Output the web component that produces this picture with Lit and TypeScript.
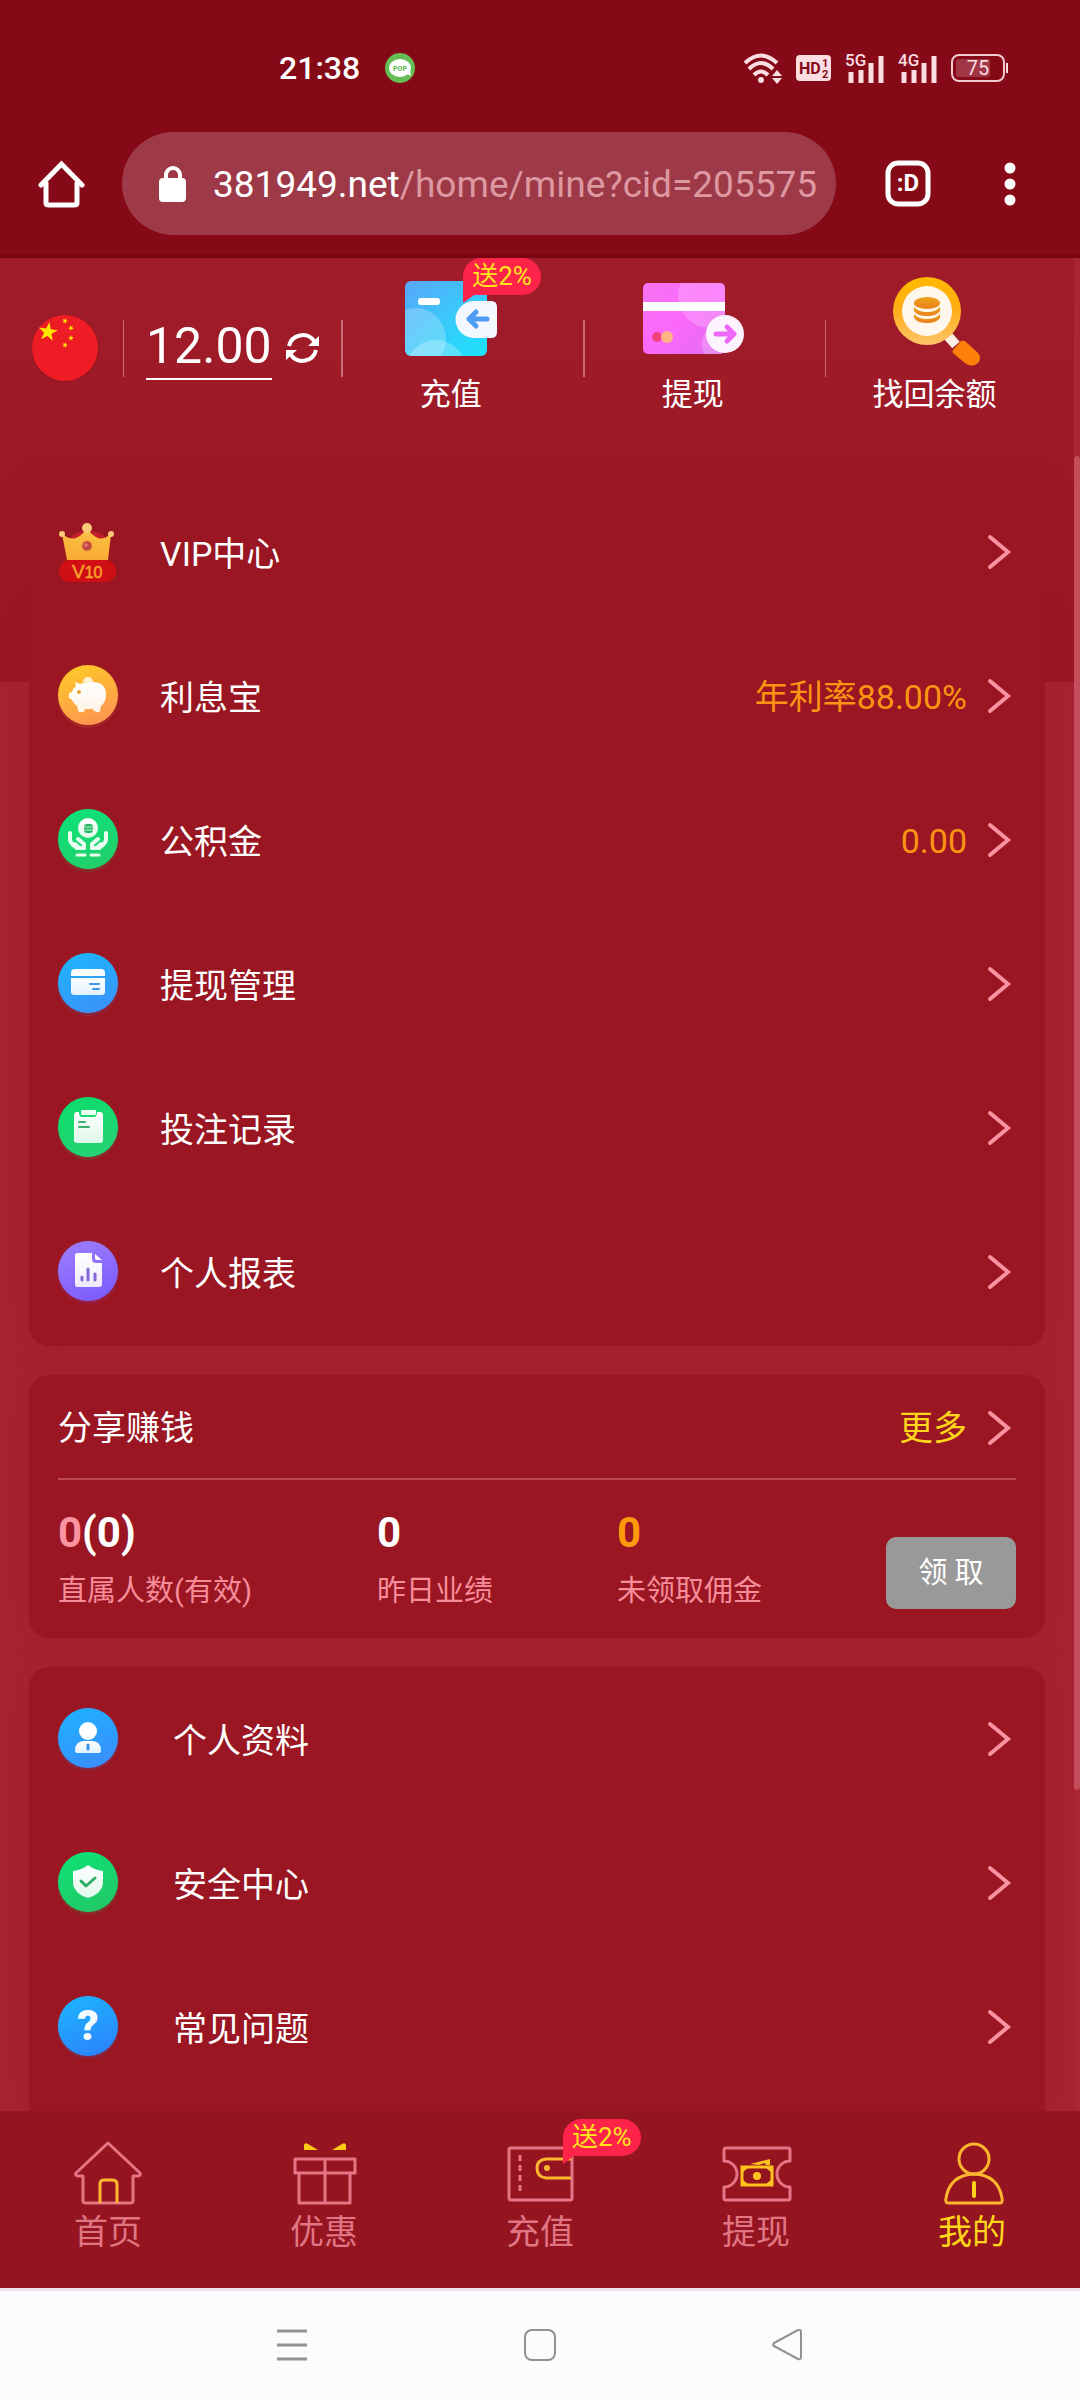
import { LitElement, html, svg, css, nothing, TemplateResult } from "lit";
import { customElement, property } from "lit/decorators.js";

const baseStyles = css`
  *,
  *::before,
  *::after {
    box-sizing: border-box;
  }
  a {
    color: inherit;
    text-decoration: none;
  }
  button {
    font: inherit;
    color: inherit;
    background: none;
    border: 0;
    padding: 0;
    margin: 0;
  }
  ul {
    list-style: none;
    margin: 0;
    padding: 0;
  }
  svg {
    display: block;
    flex: none;
  }
`;

const chevron = html`<svg class="chevron" width="29" height="38" viewBox="0 0 29 38" aria-hidden="true">
  <path d="M3 4 L21 19 L3 34" fill="none" stroke="#f991a0" stroke-width="4" stroke-linecap="round" />
</svg>`;

/* Round icons share a disc, a soft glow below it and a per-colour gradient. */
const disc = (id: string, from: string, to: string, glyph: TemplateResult) => html`
  <svg width="62" height="64" viewBox="0 0 62 64" aria-hidden="true">
    <defs>
      <linearGradient id=${id} x1="0.3" y1="0" x2="0.7" y2="1">
        <stop offset="0" stop-color=${from} />
        <stop offset="1" stop-color=${to} />
      </linearGradient>
      <linearGradient id="pale" x1="0" y1="0" x2="0" y2="1">
        <stop offset="0" stop-color="#ffffff" />
        <stop offset="1" stop-color="#ffffff" stop-opacity="0.86" />
      </linearGradient>
    </defs>
    <circle cx="31" cy="33" r="31" fill=${to} opacity="0.12" />
    <circle cx="31" cy="31" r="30" fill="url(#${id})" />
    ${glyph}
  </svg>
`;

const icons: Record<string, TemplateResult> = {
  vip: html`<svg width="62" height="64" viewBox="0 0 62 64" aria-hidden="true">
    <defs>
      <linearGradient id="crown" x1="0" y1="0" x2="0" y2="1">
        <stop offset="0" stop-color="#fcc245" />
        <stop offset="1" stop-color="#f8ab35" />
      </linearGradient>
    </defs>
    <path d="M14 17 Q20 11 28 12 H34 Q44 12 48 17 L44 28 H18 Z" fill="#c4202a" />
    <path d="M5 14 Q13 20 19 18 Q26 15 30 8 Q34 15 41 18 Q46 20 54 14 L51 40 H10 Z" fill="url(#crown)" />
    <circle cx="5" cy="14" r="3" fill="#fbc878" />
    <circle cx="30" cy="8" r="5" fill="#fbc878" />
    <circle cx="54" cy="14" r="3" fill="#fbc878" />
    <circle cx="30" cy="26" r="5" fill="#c2453f" stroke="#e98a3c" stroke-width="1" />
    <circle cx="29" cy="25" r="2" fill="#da7368" />
    <rect x="2" y="40" width="57" height="22" rx="11" fill="#cf0f14" />
    <text x="15" y="58" font-family="Liberation Sans, sans-serif" font-size="19" fill="#fca02c" stroke="#fca02c" stroke-width="0.5">V<tspan font-size="16">10</tspan></text>
  </svg>`,
  piggy: disc("amber", "#ffc928", "#fd9452", svg`
    <path d="M26 18 A5 5 0 0 1 36 18 Z" fill="#fff3cf" />
    <path d="M18 18 L23 20 Q27 18 33 18 H37 Q49 19 49 31 Q49 38 44 42 L43 47 Q42 49 40 48 L37 47 L36 45 H28 L27 48 H23 Q21 48 21 46 L20 42 Q17 40 15 36 L12 34 V29 L15 28 Q16 24 19 22 Z" fill="url(#pale)" />
    <circle cx="22" cy="28" r="2" fill="#e9a53a" />`),
  fund: disc("mint", "#0de277", "#23cf6b", svg`
    <circle cx="31" cy="20" r="10" fill="url(#pale)" />
    <rect x="27" y="16" width="9" height="9" rx="3" fill="#29b765" />
    <path d="M27 19 H36 M27 22 H36" stroke="#bdf5d3" stroke-width="1" />
    <g fill="none" stroke="#e9fff0" stroke-linecap="round" stroke-linejoin="round">
      <path d="M13 25 V32 Q14 36 20 40 H27" stroke-width="4" />
      <path d="M21 31 L27 36 V40 H22 L18 36" stroke-width="4" />
      <path d="M49 25 V32 Q48 36 42 40 H35" stroke-width="4" />
      <path d="M41 31 L35 36 V40 H40 L44 36" stroke-width="4" />
      <path d="M20 47 H28 M34 47 H42" stroke-width="3" />
    </g>`),
  bankcard: disc("sky", "#1fb4fc", "#3a92fa", svg`
    <path d="M14 24 V21 Q14 17 18 17 H44 Q48 17 48 21 V24 Z" fill="#fff" />
    <path d="M14 26 H48 V40 Q48 43 45 43 H17 Q14 43 14 40 Z" fill="url(#pale)" />
    <path d="M33 32 H42 M36 37 H42" stroke="#3e97e6" stroke-width="2" stroke-linecap="round" />`),
  clipboard: disc("leaf", "#0ddd6d", "#26d273", svg`
    <path d="M20 16 H22 Q22 21 25 21 H37 Q40 21 40 16 H43 Q46 16 46 19 V44 Q46 47 43 47 H20 Q17 47 17 44 V19 Q17 16 20 16 Z" fill="url(#pale)" />
    <rect x="24" y="14" width="15" height="5" rx="1" fill="#effff4" />
    <path d="M22 26 H28 M22 31 H32" stroke="#3fae6c" stroke-width="2" stroke-linecap="round" />`),
  report: disc("violet", "#9a7cff", "#7c5cfb", svg`
    <path d="M20 13 H35 V19 Q35 23 39 23 H45 V44 Q45 47 42 47 H20 Q18 47 18 44 V16 Q18 13 20 13 Z" fill="url(#pale)" />
    <path d="M38 14 L45 20 H40 Q38 20 38 18 Z" fill="#fff" />
    <path d="M25 37 V40 M31 29 V40 M38 34 V40" stroke="#8467d8" stroke-width="3" stroke-linecap="round" />`),
  person: disc("azure", "#1fb0ff", "#3a8efc", svg`
    <circle cx="31" cy="24" r="9" fill="#fff" />
    <path d="M18 44 Q18 34 27 34 H35 Q44 34 44 44 Q44 46 42 46 H20 Q18 46 18 44 Z" fill="url(#pale)" />
    <path d="M31 38 V42" stroke="#3993e4" stroke-width="3" stroke-linecap="round" />`),
  shield: disc("jade", "#0de074", "#22c866", svg`
    <path d="M31 14 Q37 19 46 20 V31 Q46 42 31 47 Q16 42 16 31 V20 Q25 19 31 14 Z" fill="url(#pale)" />
    <path d="M24 30 L29 35 L38 27" fill="none" stroke="#2fae68" stroke-width="3" stroke-linecap="round" stroke-linejoin="round" />`),
  question: disc("ocean", "#1eb2ff", "#2b84fb", svg`
    <text x="31" y="45" text-anchor="middle" font-family="Roboto, sans-serif" font-weight="900" font-size="42" fill="#f2fbff">?</text>`),
};

const navIcons: Record<string, TemplateResult> = {
  home: html`<svg width="72" height="64" viewBox="0 0 72 64" aria-hidden="true">
    <path d="M36 2 L68 32 Q69 35 66 35 H61 V60 Q61 62 58 62 H14 Q11 62 11 60 V35 H6 Q3 35 4 32 Z" fill="none" stroke="#e57485" stroke-width="3" stroke-linejoin="round" />
    <path d="M28 62 V43 Q28 39 32 39 H40 Q45 39 45 43 V62" fill="none" stroke="#ffb62f" stroke-width="3" />
  </svg>`,
  gift: html`<svg width="72" height="64" viewBox="0 0 72 64" aria-hidden="true">
    <g fill="none" stroke="#e57485" stroke-width="3" stroke-linejoin="round">
      <rect x="7" y="18" width="60" height="14" />
      <path d="M11 32 V62 H62 V32 M37 18 V62" />
    </g>
    <path d="M16 9 V4 Q17 1 20 3 L30 9 Z M58 9 V4 Q57 1 54 3 L44 9 Z" fill="#ffcb14" />
  </svg>`,
  wallet: html`<svg width="72" height="64" viewBox="0 0 72 64" aria-hidden="true">
    <rect x="5" y="7" width="63" height="52" rx="2" fill="none" stroke="#e57485" stroke-width="3" />
    <path d="M16 14 V50" stroke="#e57485" stroke-width="3" stroke-dasharray="6 4" />
    <path d="M67 18 H42 Q33 19 33 27 Q33 36 42 37 H67" fill="none" stroke="#ffb62f" stroke-width="3" />
    <circle cx="43" cy="27" r="3" fill="#ffb62f" />
  </svg>`,
  ticket: html`<svg width="72" height="64" viewBox="-1 0 72 64" aria-hidden="true">
    <path d="M5 7 H67 Q69 7 69 9 V20 A13 13 0 0 0 69 46 V57 Q69 59 67 59 H5 Q3 59 3 57 V46 A13 13 0 0 0 3 20 V9 Q3 7 5 7 Z" fill="none" stroke="#e57485" stroke-width="3" stroke-linejoin="round" />
    <rect x="21" y="26" width="30" height="18" fill="none" stroke="#ffc21e" stroke-width="3" />
    <path d="M22 27 h5 l-5 4 z M50 27 h-5 l5 4 z M22 43 h5 l-5 -4 z M50 43 h-5 l5 -4 z" fill="#ffc21e" />
    <circle cx="36" cy="35" r="4" fill="#ffc21e" />
    <path d="M29 23 L49 18 V24 L45 24 L44 22 L38 24 Z" fill="#ffc21e" />
  </svg>`,
  mine: html`<svg width="72" height="64" viewBox="-1 0 72 64" aria-hidden="true">
    <g fill="none" stroke="#ffb62f" stroke-width="3">
      <circle cx="37" cy="18" r="15" />
      <path d="M11 62 Q8 62 9 57 Q13 34 37 33 Q61 34 65 57 Q66 62 63 62 Z" stroke-linejoin="round" />
      <path d="M37 42 V55" stroke="#ffd21c" stroke-width="4" stroke-linecap="round" />
    </g>
  </svg>`,
};

const actionIcons: Record<string, TemplateResult> = {
  deposit: html`<svg width="105" height="105" viewBox="0 0 105 105" aria-hidden="true">
    <defs>
      <linearGradient id="wallet" x1="0" y1="0" x2="1" y2="1">
        <stop offset="0" stop-color="#5aa5fb" />
        <stop offset="0.5" stop-color="#3ac8fa" />
        <stop offset="1" stop-color="#1be4fb" />
      </linearGradient>
      <clipPath id="walletBox"><rect x="7" y="15" width="82" height="75" rx="6" /></clipPath>
    </defs>
    <rect x="7" y="15" width="82" height="75" rx="6" fill="url(#wallet)" />
    <g clip-path="url(#walletBox)" fill="#fff" opacity="0.22">
      <circle cx="17" cy="73" r="31" />
    </g>
    <g clip-path="url(#walletBox)" fill="#fff" opacity="0.25">
      <circle cx="38" cy="104" r="30" />
    </g>
    <rect x="20" y="32" width="22" height="7" rx="3" fill="#fff" />
    <path d="M76 35 H93 Q99 35 99 41 V66 Q99 72 93 72 H76 A18 18 0 0 1 76 35 Z" fill="#f3f7ff" />
    <path d="M89 53 H71 M78 46 L71 53 L78 60" fill="none" stroke="#4e9df5" stroke-width="5" stroke-linecap="round" stroke-linejoin="round" />
  </svg>`,
  withdraw: html`<svg width="105" height="105" viewBox="0 0 105 105" aria-hidden="true">
    <defs>
      <linearGradient id="card" x1="0" y1="0" x2="1" y2="1">
        <stop offset="0" stop-color="#f673f3" />
        <stop offset="0.5" stop-color="#fb68fb" />
        <stop offset="1" stop-color="#e070f0" />
      </linearGradient>
      <clipPath id="cardBox"><rect x="3" y="17" width="82" height="71" rx="5" /></clipPath>
    </defs>
    <rect x="3" y="17" width="82" height="71" rx="5" fill="url(#card)" />
    <g clip-path="url(#cardBox)" fill="#fff" opacity="0.2">
      <circle cx="70" cy="30" r="32" />
      <circle cx="84" cy="78" r="22" />
    </g>
    <rect x="3" y="36" width="82" height="9" fill="#fff" />
    <circle cx="17" cy="71" r="5" fill="#f0407e" />
    <circle cx="27" cy="71" r="6" fill="#fdb382" />
    <circle cx="85" cy="68" r="19" fill="#fdf3ff" />
    <path d="M76 68 H94 M87 61 L94 68 L87 75" fill="none" stroke="#ee69f7" stroke-width="5" stroke-linecap="round" stroke-linejoin="round" />
  </svg>`,
  recover: html`<svg width="105" height="105" viewBox="0 0 105 105" aria-hidden="true">
    <defs>
      <linearGradient id="lens" x1="0" y1="0" x2="0" y2="1">
        <stop offset="0" stop-color="#ffb900" />
        <stop offset="0.45" stop-color="#ffad12" />
        <stop offset="1" stop-color="#fdc56a" />
      </linearGradient>
      <linearGradient id="coins" x1="0" y1="0" x2="0" y2="1">
        <stop offset="0" stop-color="#eca51c" />
        <stop offset="1" stop-color="#ea7e1b" />
      </linearGradient>
    </defs>
    <path d="M66 70 L74 79" stroke="#fdeee2" stroke-width="10" />
    <path d="M71 84 L79 75 Q82 74 84 76 L96 87 Q100 92 96 97 Q90 102 83 97 L71 87 Q70 86 71 84 Z" fill="#fd8008" />
    <circle cx="45" cy="45" r="34" fill="url(#lens)" />
    <circle cx="45" cy="45" r="25" fill="#fff7ec" />
    <g fill="url(#coins)" transform="translate(1 0)">
      <ellipse cx="44" cy="37" rx="13" ry="6" />
      <path d="M31 41 Q35 46 44 46 Q53 46 57 41 V45 Q54 50 44 50 Q34 50 31 45 Z" />
      <path d="M31 48 Q35 53 44 53 Q53 53 57 48 V52 Q54 57 44 57 Q34 57 31 52 Z" />
    </g>
  </svg>`,
};

interface Row {
  icon: string;
  label: string;
  value?: string;
}

/** A rounded panel listing links with an icon, a label and an optional value. */
@customElement("menu-card")
export class MenuCard extends LitElement {
  @property({ attribute: false }) rows: Row[] = [];

  static styles = [
    baseStyles,
    css`
      :host {
        display: block;
      }
      .row {
        display: flex;
        align-items: center;
        height: 144px;
        padding: 0 29px 0 28px;
      }
      .label {
        flex: 1;
        padding: 4px 0 0 var(--label-gap, 41px);
      }
      .value {
        color: #fb9412;
        padding: 2px 20px 0 0;
      }
    `,
  ];

  render() {
    return html`<ul>
      ${this.rows.map(
        (r) => html`<li>
          <a class="row" href="#">
            ${icons[r.icon]}
            <span class="label">${r.label}</span>
            ${r.value ? html`<span class="value">${r.value}</span>` : nothing} ${chevron}
          </a>
        </li>`
      )}
    </ul>`;
  }
}

@customElement("promo-badge")
export class PromoBadge extends LitElement {
  static styles = css`
    :host {
      display: block;
      padding: 0 9px;
      border-radius: 19px 19px 19px 0;
      background: #fe2349;
      color: #ffe51c;
      font-size: 26px;
      line-height: 37px;
      white-space: nowrap;
    }
    :host::after {
      content: "";
      position: absolute;
      left: 0;
      top: 100%;
      border-top: 8px solid #fe2349;
      border-right: 11px solid transparent;
    }
  `;
  render() {
    return html`<slot></slot>`;
  }
}

@customElement("app-root")
export class AppRoot extends LitElement {
  static styles = [
    baseStyles,
    css`
      :host {
        display: flex;
        flex-direction: column;
        min-height: 100vh;
        font-family: Roboto, "Noto Sans CJK SC", sans-serif;
        font-size: 34px;
        line-height: 48px;
        color: #fff;
        background: #a82331;
      }

      .chrome {
        background: #850917;
        border-bottom: 3px solid #780511;
        padding-bottom: 20px;
      }
      .status {
        display: flex;
        align-items: center;
        padding: 48px 72px 44px 279px;
        height: 132px;
      }
      .time {
        font-size: 32px;
        line-height: 40px;
        font-weight: 500;
        margin-right: 25px;
      }
      .signals {
        display: flex;
        align-items: center;
        gap: 14px;
        margin-left: auto;
      }
      .toolbar {
        display: flex;
        align-items: center;
        gap: 37px;
        padding: 0 40px 0 38px;
      }
      .address {
        flex: 1;
        min-width: 0;
        display: flex;
        align-items: center;
        gap: 27px;
        height: 103px;
        padding: 2px 18px 0 37px;
        border-radius: 52px;
        background: #9e3a47;
        text-align: left;
        font-size: 37px;
        white-space: nowrap;
        overflow: hidden;
      }
      .path {
        color: #dd98a2;
      }
      .tabs {
        padding: 0 12px;
      }
      .more {
        padding: 0 24px;
      }

      .page {
        flex: 1;
        display: flex;
        flex-direction: column;
        position: relative;
        padding: 0 35px 0 29px;
        background: linear-gradient(#a11c2a, #991622) 0 0 / 100% 424px no-repeat, #a82331;
      }
      .scrollbar {
        position: absolute;
        top: 0;
        right: 0;
        bottom: 0;
        width: 6px;
        background: #a82534;
      }
      .thumb {
        height: 72%;
        margin-top: 198px;
        border-radius: 3px;
        background: #c54c5b;
      }
      .head {
        display: flex;
        height: 222px;
        margin: 0 -22px 0 0;
        padding: 0 0 42px 3px;
      }
      .account {
        display: flex;
        align-items: center;
        gap: 22px;
      }
      .rule {
        flex: none;
        width: 1px;
        height: 57px;
        background: #cc6b78;
        align-self: center;
      }
      .rule.bold {
        width: 2px;
      }
      .balance {
        display: flex;
        align-items: center;
        gap: 14px;
      }
      .amount {
        font-size: 50px;
        line-height: 58px;
        padding-bottom: 3px;
        border-bottom: 2px solid #fff;
      }
      .actions {
        flex: 1;
        display: grid;
        grid-template-columns: repeat(3, 1fr);
        margin-left: 22px;
      }
      .action {
        display: flex;
        height: 100%;
      }
      .tile {
        flex: 1;
        display: flex;
        flex-direction: column;
        align-items: center;
        padding: 8px 24px 0 0;
        font-size: 31px;
        line-height: 48px;
        white-space: nowrap;
      }
      .art {
        position: relative;
      }
      .art promo-badge {
        position: absolute;
        left: 65px;
        top: -8px;
      }

      .card {
        background: #991622;
        border-radius: 20px;
        margin-bottom: 29px;
        box-shadow: 0 0 30px rgba(140, 22, 32, 0.3);
      }
      .card.last {
        flex: 1;
        margin-bottom: 0;
        border-radius: 20px 20px 0 0;
        --label-gap: 54px;
      }
      .main-menu {
        padding-bottom: 2px;
      }
      .share {
        padding: 0 29px 29px;
      }
      .share-head {
        display: flex;
        align-items: center;
        height: 105px;
      }
      .share-title {
        flex: 1;
        margin: 0;
        font: inherit;
      }
      .share-more {
        display: flex;
        align-items: center;
        gap: 20px;
        color: #ffd61a;
      }
      .divider {
        height: 2px;
        border: 0;
        margin: -2px 0 0;
        background: #bb4553;
      }
      .share-body {
        display: grid;
        grid-template-columns: 319fr 240fr 269fr 130px;
        align-items: end;
        padding-top: 29px;
      }
      .stats {
        display: contents;
      }
      .stat {
        display: flex;
        flex-direction: column-reverse;
        white-space: nowrap;
      }
      .stat dt {
        font-size: 29px;
        line-height: 36px;
        color: #f78c9a;
        padding-top: 16px;
      }
      .stat dd {
        margin: 0;
        font-size: 42px;
        line-height: 48px;
        font-weight: 700;
      }
      .pink {
        color: #fc93a1;
      }
      .orange {
        color: #fe9a0c;
      }
      .claim {
        height: 72px;
        border-radius: 10px;
        background: #999;
        font-size: 29px;
        line-height: 40px;
        color: #fff;
      }
      dl {
        margin: 0;
      }

      .tabbar {
        background: #941420;
        position: relative;
      }
      .tabbar ul {
        display: grid;
        grid-template-columns: repeat(5, 1fr);
      }
      .tab {
        display: flex;
        flex-direction: column;
        align-items: center;
        gap: 6px;
        padding: 30px 0 35px;
        line-height: 42px;
        color: #e07584;
      }
      .tab.current {
        color: #ffd61a;
      }
      .tab .art promo-badge {
        left: 59px;
        top: -22px;
      }

      .system {
        display: grid;
        grid-template-columns: repeat(3, 23%);
        justify-content: center;
        justify-items: center;
        align-items: center;
        height: 112px;
        padding-bottom: 2px;
        border-top: 3px solid #ece4ea;
        background: #fcfcfe;
      }
    `,
  ];

  private mainRows: Row[] = [
    { icon: "vip", label: "VIP中心" },
    { icon: "piggy", label: "利息宝", value: "年利率88.00%" },
    { icon: "fund", label: "公积金", value: "0.00" },
    { icon: "bankcard", label: "提现管理" },
    { icon: "clipboard", label: "投注记录" },
    { icon: "report", label: "个人报表" },
  ];

  private settingRows: Row[] = [
    { icon: "person", label: "个人资料" },
    { icon: "shield", label: "安全中心" },
    { icon: "question", label: "常见问题" },
  ];

  private tabs = [
    { icon: "home", label: "首页" },
    { icon: "gift", label: "优惠" },
    { icon: "wallet", label: "充值", badge: "送2%" },
    { icon: "ticket", label: "提现" },
    { icon: "mine", label: "我的", current: true },
  ];

  private actions = [
    { icon: "deposit", label: "充值", badge: "送2%" },
    { icon: "withdraw", label: "提现" },
    { icon: "recover", label: "找回余额" },
  ];

  private signal(label: string) {
    return html`<svg width="39" height="44" viewBox="0 -6 39 44" aria-hidden="true">
      <text x="0" y="14" font-family="Roboto, sans-serif" font-weight="500" font-size="17" fill="#fbdde2">${label}</text>
      <path d="M6 20 V31 M16 18 V31 M26 11 V31 M36 4 V31" stroke="#fbdde2" stroke-width="5" />
    </svg>`;
  }

  private renderChrome() {
    return html`<header class="chrome">
      <div class="status">
        <span class="time">21:38</span>
        <svg width="30" height="30" viewBox="0 0 30 30" aria-hidden="true">
          <circle cx="15" cy="15" r="15" fill="#66bc55" />
          <ellipse cx="15" cy="15" rx="11" ry="9" fill="#fff" />
          <path d="M20 20 L26 23 L25 16 Z" fill="#fff" />
          <text x="15" y="18" text-anchor="middle" font-family="Roboto, sans-serif" font-weight="900" font-size="7" fill="#66bc55">POP</text>
        </svg>
        <div class="signals">
          <svg width="38" height="32" viewBox="0 0 38 32" aria-hidden="true">
            <g fill="none" stroke="#fbdde2" stroke-width="4">
              <path d="M1 11 Q17 -4 33 11" />
              <path d="M5 17 Q17 5 29 17" />
              <path d="M10 23 Q17 16 24 23" />
            </g>
            <circle cx="17" cy="28" r="3" fill="#fbdde2" />
            <path d="M28 24 L33 18 L38 24 Z M28 26 H38 L33 32 Z" fill="#fbdde2" />
          </svg>
          <svg width="35" height="26" viewBox="0 0 35 26" aria-hidden="true">
            <rect width="35" height="26" rx="4" fill="#fbdde2" />
            <g font-family="Roboto, sans-serif" font-weight="700" fill="#850917">
              <text x="3" y="19" font-size="16">HD</text>
              <text x="26" y="12" font-size="11">1</text>
              <text x="26" y="23" font-size="11">2</text>
            </g>
          </svg>
          ${this.signal("5G")} ${this.signal("4G")}
          <svg width="57" height="28" viewBox="0 0 57 28" aria-hidden="true">
            <rect x="1" y="1" width="52" height="26" rx="7" fill="none" stroke="#f3c9d0" stroke-width="2" />
            <rect x="5" y="5" width="34" height="18" rx="3" fill="#a03544" />
            <path d="M56 9 V19" stroke="#fbdde2" stroke-width="2" />
            <text x="27" y="21" text-anchor="middle" font-family="Roboto, sans-serif" font-size="20" fill="#fbdde2">75</text>
          </svg>
        </div>
      </div>
      <div class="toolbar">
        <button aria-label="Home">
          <svg width="47" height="48" viewBox="0 0 47 48" fill="none" stroke="#fff" stroke-width="5" aria-hidden="true">
            <path d="M3 25 L23.5 4 L44 25" stroke-linecap="round" />
            <path d="M8 22 V43 Q8 45 11 45 H36 Q39 45 39 43 V22" />
          </svg>
        </button>
        <button class="address" aria-label="Address">
          <svg width="27" height="37" viewBox="0 0 27 37" aria-hidden="true">
            <rect y="12" width="27" height="24" rx="4" fill="#fff" />
            <path d="M7 14 V9 A7 7 0 0 1 21 9 V14" fill="none" stroke="#fff" stroke-width="4" />
          </svg>
          <span>381949.net<span class="path">/home/mine?cid=205575</span></span>
        </button>
        <button class="tabs" aria-label="Tabs">
          <svg width="46" height="47" viewBox="0 0 46 47" aria-hidden="true">
            <rect x="3" y="3" width="40" height="41" rx="10" fill="none" stroke="#fff" stroke-width="5" />
            <text x="23" y="31" text-anchor="middle" font-family="Roboto, sans-serif" font-weight="700" font-size="24" fill="#fff">:D</text>
          </svg>
        </button>
        <button class="more" aria-label="More">
          <svg width="12" height="44" viewBox="0 0 12 44" fill="#fff" aria-hidden="true">
            <circle cx="6" cy="6" r="5.5" />
            <circle cx="6" cy="22" r="5.5" />
            <circle cx="6" cy="38" r="5.5" />
          </svg>
        </button>
      </div>
    </header>`;
  }

  private renderHead() {
    const star = "M0 -10 L2.3 -3.2 L9.5 -3.1 L3.8 1.2 L5.9 8.1 L0 4 L-5.9 8.1 L-3.8 1.2 L-9.5 -3.1 L-2.3 -3.2 Z";
    return html`<section class="head">
      <div class="account">
        <svg width="69" height="69" viewBox="0 0 69 69" role="img" aria-label="China">
          <circle cx="33" cy="35" r="34" fill="#93141f" opacity="0.6" />
          <circle cx="33" cy="34" r="33" fill="#ee1c25" />
          <g fill="#ffe600">
            <path d=${star} transform="translate(16 18) rotate(8)" />
            <path d=${star} transform="translate(33 7) scale(0.3) rotate(20)" />
            <path d=${star} transform="translate(39 14) scale(0.3) rotate(40)" />
            <path d=${star} transform="translate(39 24) scale(0.3)" />
            <path d=${star} transform="translate(33 31) scale(0.3) rotate(20)" />
          </g>
        </svg>
        <span class="rule"></span>
        <div class="balance">
          <span class="amount">12.00</span>
          <button aria-label="刷新">
            <svg width="33" height="32" viewBox="0 0 33 32" aria-hidden="true">
              <path d="M3 14 A14 14 0 0 1 28 9 M30 18 A14 14 0 0 1 5 23" fill="none" stroke="#fff" stroke-width="4" />
              <path d="M33 4 V14 H22 Z M0 28 V18 H11 Z" fill="#fff" />
            </svg>
          </button>
        </div>
      </div>
      <nav class="actions">
        ${this.actions.map(
          (a, i) => html`<a class="action" href="#">
            <span class="rule ${i < 2 ? "bold" : ""}"></span>
            <span class="tile">
              <span class="art">
                ${actionIcons[a.icon]} ${a.badge ? html`<promo-badge>${a.badge}</promo-badge>` : nothing}
              </span>
              ${a.label}
            </span>
          </a>`
        )}
      </nav>
    </section>`;
  }

  private renderShare() {
    return html`<section class="card share">
      <div class="share-head">
        <h2 class="share-title">分享赚钱</h2>
        <a class="share-more" href="#">更多 ${chevron}</a>
      </div>
      <hr class="divider" />
      <div class="share-body">
        <dl class="stats">
          <div class="stat">
            <dt>直属人数(有效)</dt>
            <dd><span class="pink">0</span>(0)</dd>
          </div>
          <div class="stat">
            <dt>昨日业绩</dt>
            <dd>0</dd>
          </div>
          <div class="stat">
            <dt>未领取佣金</dt>
            <dd class="orange">0</dd>
          </div>
        </dl>
        <button class="claim">领 取</button>
      </div>
    </section>`;
  }

  render() {
    return html`
      ${this.renderChrome()}
      <main class="page">
        ${this.renderHead()}
        <menu-card class="card main-menu" .rows=${this.mainRows}></menu-card>
        ${this.renderShare()}
        <menu-card class="card last" .rows=${this.settingRows}></menu-card>
        <div class="scrollbar"><div class="thumb"></div></div>
      </main>
      <nav class="tabbar">
        <ul>
          ${this.tabs.map(
            (t) => html`<li>
              <a class="tab ${t.current ? "current" : ""}" href="#">
                <span class="art">
                  ${navIcons[t.icon]} ${t.badge ? html`<promo-badge>${t.badge}</promo-badge>` : nothing}
                </span>
                ${t.label}
              </a>
            </li>`
          )}
        </ul>
      </nav>
      <footer class="system">
        <button aria-label="Recent apps">
          <svg width="32" height="32" viewBox="0 0 32 32" aria-hidden="true">
            <path d="M1 2 H31 M1 16 H31 M1 30 H31" stroke="#929292" stroke-width="3" />
          </svg>
        </button>
        <button aria-label="Home screen">
          <svg width="32" height="32" viewBox="0 0 32 32" aria-hidden="true">
            <rect x="1" y="1" width="30" height="30" rx="7" fill="none" stroke="#929292" stroke-width="2" />
          </svg>
        </button>
        <button aria-label="Back">
          <svg width="32" height="32" viewBox="0 0 32 32" aria-hidden="true">
            <path d="M2 14 L26 1 Q29 0 29 3 V28 Q29 31 26 30 L2 17 Q0 16 2 14 Z" fill="none" stroke="#929292" stroke-width="2" />
          </svg>
        </button>
      </footer>
    `;
  }
}
